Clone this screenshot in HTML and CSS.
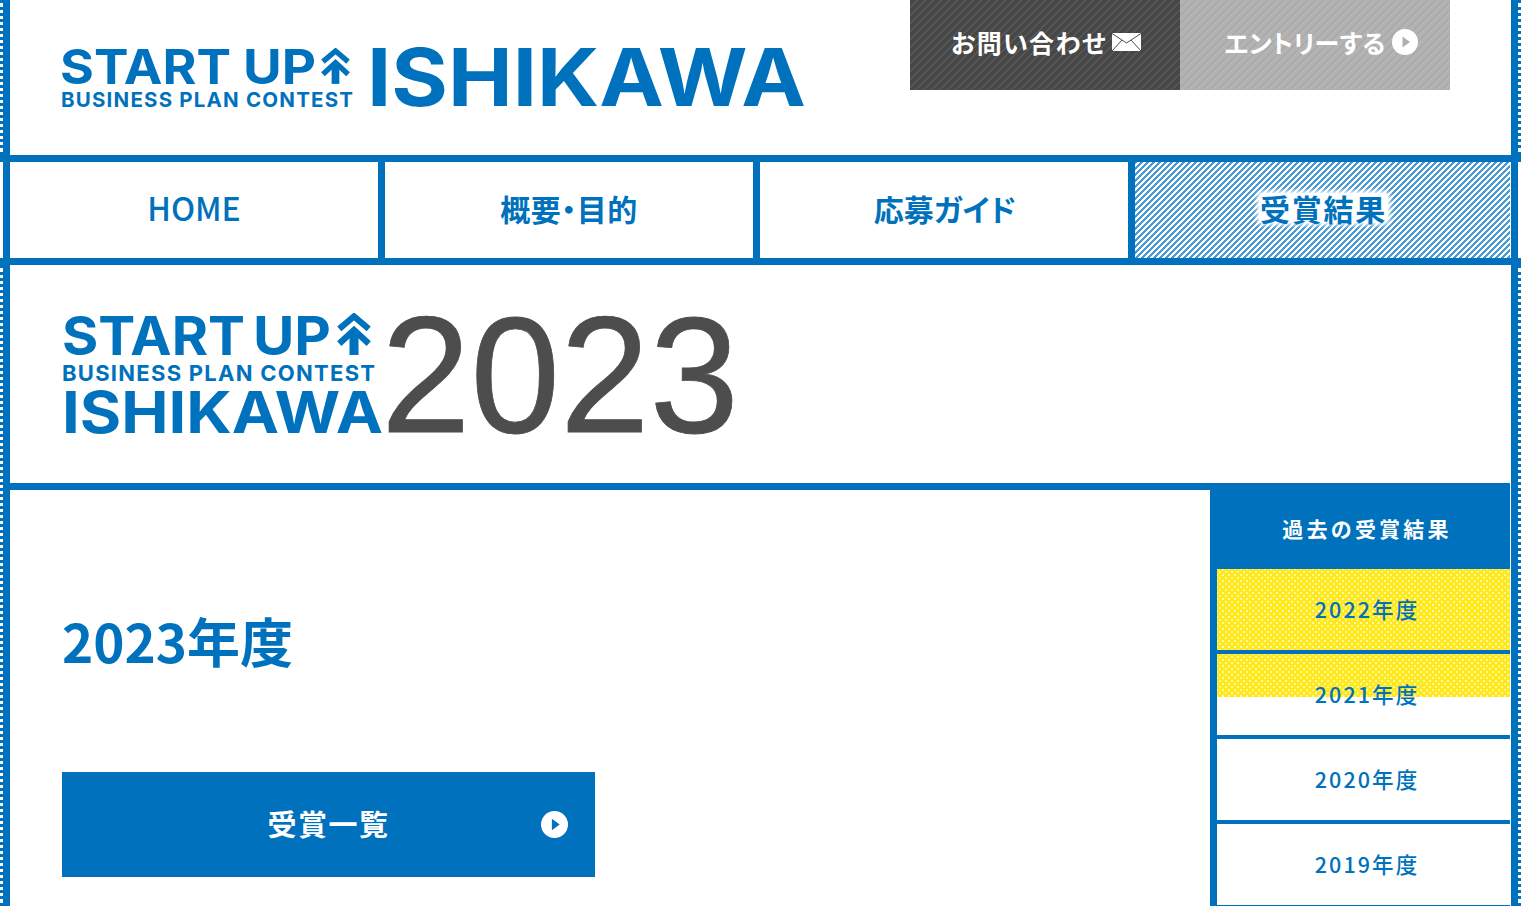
FILE: index.html
```html
<!DOCTYPE html>
<html lang="ja">
<head>
<meta charset="utf-8">
<title>STARTUP BUSINESS PLAN CONTEST ISHIKAWA</title>
<link rel="stylesheet" href="styles.css">
</head>
<body>
<svg class="defs" width="0" height="0" aria-hidden="true">
  <symbol id="arrows" viewBox="0 0 30 37">
    <polyline class="arrow-line" points="2,14 15,3 28,14"/>
    <polyline class="arrow-line" points="2,27 15,15 28,27"/>
    <line class="arrow-line arrow-stem" x1="15" y1="17" x2="15" y2="37"/>
  </symbol>
  <symbol id="play" viewBox="0 0 26 26">
    <circle class="play-disc" cx="13" cy="13" r="13"/>
    <polygon class="play-tri" points="10.5,7.5 18,13 10.5,18.5"/>
  </symbol>
</svg>
<div class="page">
  <header class="site-header framed">
    <svg class="logo-main" viewBox="62 40 745 72" role="img" aria-label="START UP BUSINESS PLAN CONTEST ISHIKAWA">
      <text class="logo-text" x="60" y="84" font-size="48" textLength="171" lengthAdjust="spacingAndGlyphs">START</text>
      <text class="logo-text" x="243" y="84" font-size="48" textLength="73" lengthAdjust="spacingAndGlyphs">UP</text>
      <use href="#arrows" x="321" y="48" width="29" height="36"/>
      <text class="logo-text" x="61" y="107" font-size="20.5" textLength="292" lengthAdjust="spacing">BUSINESS PLAN CONTEST</text>
      <text class="logo-text" x="367" y="105.5" font-size="80" textLength="439" lengthAdjust="spacingAndGlyphs">ISHIKAWA</text>
    </svg>
    <div class="head-links">
      <a class="head-link head-link-dark" href="#">お問い合わせ
        <svg class="mail-icon" viewBox="0 0 29 18"><rect class="mail-body" width="29" height="18"/><path class="mail-line" d="M0 0.5 14.5 10 29 0.5M0 18 10 7M29 18 19 7"/></svg>
      </a>
      <a class="head-link head-link-gray" href="#">エントリーする
        <svg class="play-icon play-gray"><use href="#play"/></svg>
      </a>
    </div>
  </header>
  <nav class="site-nav">
    <div class="nav-row">
      <a class="nav-item nav-home" href="#">HOME</a>
      <a class="nav-item" href="#">概要・目的</a>
      <a class="nav-item nav-guide" href="#">応募ガイド</a>
      <a class="nav-item nav-current" href="#"><span class="nav-current-label">受賞結果</span></a>
    </div>
  </nav>
  <div class="framed main-frame">
    <div class="year-head">
      <svg class="logo-year" viewBox="62 305 680 135" role="img" aria-label="START UP BUSINESS PLAN CONTEST ISHIKAWA 2023">
        <text class="logo-text" x="62" y="354.5" font-size="53" textLength="183" lengthAdjust="spacingAndGlyphs">START</text>
        <text class="logo-text" x="253" y="354.5" font-size="53" textLength="78" lengthAdjust="spacingAndGlyphs">UP</text>
        <use href="#arrows" x="337" y="313" width="34" height="42"/>
        <text class="logo-text" x="62" y="381" font-size="22" textLength="313" lengthAdjust="spacing">BUSINESS PLAN CONTEST</text>
        <text class="logo-text" x="62" y="433" font-size="57.5" textLength="321" lengthAdjust="spacingAndGlyphs">ISHIKAWA</text>
        <text class="logo-year-num" x="381" y="431.5" font-size="165" textLength="358" lengthAdjust="spacingAndGlyphs">2023</text>
      </svg>
    </div>
    <div class="content-row">
      <main class="content">
        <h1 class="year-title">2023年度</h1>
        <a class="list-button" href="#">受賞一覧
          <svg class="play-icon play-blue"><use href="#play"/></svg>
        </a>
      </main>
      <aside class="sidebar">
        <h2 class="sidebar-title">過去の受賞結果</h2>
        <ul class="sidebar-list">
          <li class="sidebar-item is-filled"><a class="sidebar-link" href="#">2022年度</a></li>
          <li class="sidebar-item is-partial"><a class="sidebar-link" href="#">2021年度</a></li>
          <li class="sidebar-item"><a class="sidebar-link" href="#">2020年度</a></li>
          <li class="sidebar-item"><a class="sidebar-link" href="#">2019年度</a></li>
        </ul>
      </aside>
    </div>
  </div>
</div>
</body>
</html>
```
FILE: styles.css
```css
* { box-sizing: border-box; }
html, body { margin: 0; padding: 0; height: 906px; overflow: hidden; background: #fff; }
body { font-family: "Noto Sans CJK JP", "Noto Sans", sans-serif; color: #0071bc; }
a { color: inherit; text-decoration: none; }
h1, h2, ul { margin: 0; padding: 0; }
li { list-style: none; }
.defs { position: absolute; }

.page { width: 1521px; height: 906px; overflow: hidden; }
.framed { border-left: 3px dotted #0071bc; border-right: 3px dotted #0071bc; position: relative; }
.framed::before { content: ""; position: absolute; top: 0; bottom: 0; left: 0; right: 0; border-left: 7px solid #0071bc; border-right: 7px solid #0071bc; pointer-events: none; }

/* header */
.site-header { height: 155px; display: flex; justify-content: space-between; align-items: flex-start; padding: 0 68px 0 62px; margin: 0; }
.logo-main { width: 745px; height: 72px; margin-top: 40px; margin-left: -3px; flex: none; }
.logo-text { font-family: "Inter", "Liberation Sans", sans-serif; font-weight: 700; fill: #0071bc; }
.arrow-line { fill: none; stroke: #0071bc; stroke-width: 5.5; }
.arrow-stem { stroke-width: 8; }
.head-links { display: flex; flex: none; }
.head-link { width: 270px; height: 90px; display: flex; align-items: center; justify-content: center; gap: 5px; color: #fff; font-size: 25px; font-weight: 700; line-height: 1; font-feature-settings: "palt"; letter-spacing: 1.4px; padding: 0 0 6px 2px; }
.head-link-dark { background: repeating-linear-gradient(135deg, #474747 0 4.243px, #585858 4.243px 5.657px); }
.head-link-gray { background: repeating-linear-gradient(135deg, #b3b3b3 0 4.243px, #a9a9a9 4.243px 5.657px); letter-spacing: 0.3px; gap: 6px; padding-left: 12px; }
.mail-icon { width: 29px; height: 18px; flex: none; }
.mail-body { fill: #fff; }
.mail-line { fill: none; stroke: #4a4a4a; stroke-width: 1; }
.play-icon { width: 26px; height: 26px; flex: none; }
.play-disc { fill: #fff; }
.play-tri { fill: var(--play-tri); }
.play-gray { --play-tri: #b0b0b0; }
.play-blue { --play-tri: #0071bc; }

/* global nav */
.site-nav { border-top: 7px solid #0071bc; border-bottom: 7px solid #0071bc; padding: 0 3px; height: 110px; }
.nav-row { display: grid; grid-template-columns: 375px 375px 375px 1fr; height: 96px; border-right: 7px solid #0071bc; }
.nav-item { border-left: 7px solid #0071bc; display: flex; align-items: center; justify-content: center; font-size: 30px; font-weight: 700; line-height: 1; letter-spacing: 0.5px; font-feature-settings: "palt"; padding-bottom: 4px; }
.nav-home { font-size: 32px; font-weight: 500; letter-spacing: 0; padding-bottom: 6px; }
.nav-guide { letter-spacing: 0.2px; padding-left: 2px; }
.nav-current { margin-right: 1px; padding-left: 2px; background: repeating-linear-gradient(135deg, #4a9ad6 0 1.8px, #fff 1.8px 4.2426px); }
.nav-current-label { background: #fff; box-shadow: 0 0 4px 2px #fff; padding: 0 1px; letter-spacing: 1.8px; border-radius: 4px; }

/* year head */
.main-frame { height: 641px; }
.year-head { height: 225px; border-bottom: 7px solid #0071bc; margin: 0 8px 0 7px; padding: 40px 0 0 52px; }
.logo-year { width: 680px; height: 135px; display: block; }
.logo-year-num { font-family: "Liberation Sans", sans-serif; fill: #4d4d4d; stroke: #4d4d4d; stroke-width: 0.8; }

/* content */
.content-row { display: flex; align-items: flex-start; margin: 0 8px 0 7px; }
.content { flex: 1; padding: 0 0 0 52px; }
.year-title { font-size: 53px; font-weight: 700; line-height: 1; color: #0071bc; margin-top: 124px; height: 158px; }
.list-button { width: 533px; height: 105px; background: #0071bc; color: #fff; display: flex; align-items: center; justify-content: center; position: relative; font-size: 29px; font-weight: 700; line-height: 1; letter-spacing: 1.5px; padding-bottom: 2px; }
.list-button .play-icon { position: absolute; right: 27px; top: 39px; width: 27px; height: 27px; }

/* sidebar */
.sidebar { width: 300px; flex: none; margin-top: -7px; }
.sidebar-title { height: 86px; background: #0071bc; color: #fff; font-size: 21px; font-weight: 700; letter-spacing: 3.2px; line-height: 1; display: flex; align-items: center; justify-content: center; padding: 4px 0 0 14px; }
.sidebar-list { border-left: 7px solid #0071bc; }
.sidebar-item { height: 85px; border-bottom: 4px solid #0071bc; position: relative; }
.sidebar-item.is-filled::before, .sidebar-item.is-partial::before { content: ""; position: absolute; left: 0; right: 0; top: 0; background-color: #ffe81c; background-image: radial-gradient(circle, #fff6a0 0.9px, transparent 1.2px), radial-gradient(circle, #fff6a0 0.9px, transparent 1.2px); background-size: 6px 6px; background-position: 0 0, 3px 3px; }
.sidebar-item.is-filled::before { bottom: 0; }
.sidebar-item.is-partial::before { height: 43px; }
.sidebar-link { position: relative; display: flex; align-items: center; justify-content: center; height: 81px; font-size: 21.5px; font-weight: 500; line-height: 1; letter-spacing: 2.1px; padding: 0 0 2px 7px; color: #0071bc; }
```
